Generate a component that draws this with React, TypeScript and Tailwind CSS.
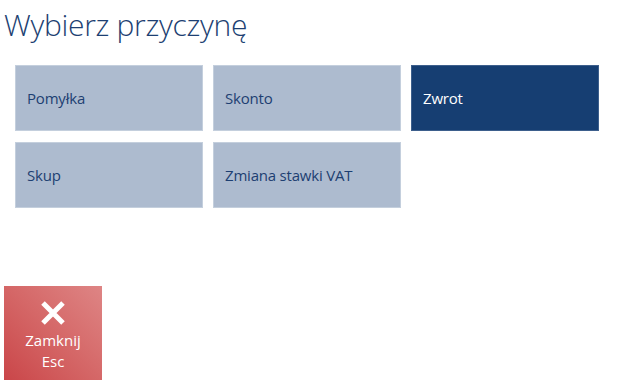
import React from "react";

const Tile = ({ label, active }: { label: string; active?: boolean }) => (
  <div
    className={
      active
        ? "h-[66px] w-[188px] flex items-center pl-[11px] bg-[#163e72] border border-[#3d5f8c] text-white text-[15px]"
        : "h-[66px] w-[188px] flex items-center pl-[11px] bg-[#adbbcf] border border-[#c4cfdd] text-[#1d3f72] text-[15px]"
    }
  >
    <span className="mt-[1px] tracking-[-0.2px]">{label}</span>
  </div>
);

export default function App() {
  return (
    <div
      className="w-[634px] h-[380px] bg-white relative overflow-hidden"
      style={{ fontFamily: '"Open Sans", "Noto Sans", sans-serif' }}
    >
      <div className="pl-[4px] pt-[5px] text-[30px] font-light leading-[40px] text-[#1d3f72] tracking-[-0.3px]">
        Wybierz przyczynę
      </div>
      <div className="ml-[15px] mt-[20px] grid grid-cols-[188px_188px_188px] gap-x-[10px] gap-y-[11px]">
        <Tile label="Pomyłka" />
        <Tile label="Skonto" />
        <Tile label="Zwrot" active />
        <Tile label="Skup" />
        <Tile label="Zmiana stawki VAT" />
      </div>
      <div className="absolute left-[4px] top-[286px] w-[98px] h-[100px] bg-gradient-to-tr from-[#c94347] to-[#de8585] flex flex-col items-center text-white text-[15px]">
        <svg width="26" height="26" viewBox="0 0 26 26" className="mt-[14px]">
          <path d="M3 3 L23 23 M23 3 L3 23" stroke="white" strokeWidth="5" />
        </svg>
        <div className="mt-[4px] leading-[21px]">Zamknij</div>
        <div className="leading-[21px]">Esc</div>
      </div>
    </div>
  );
}
